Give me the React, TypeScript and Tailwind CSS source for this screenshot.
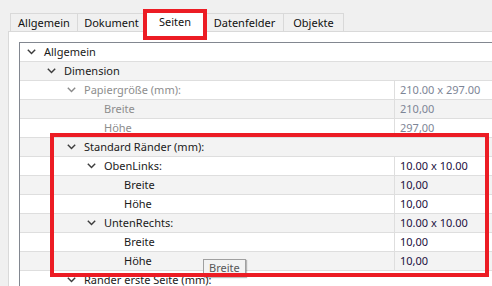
import React from "react";

type RowDef = {
  depth: number;
  label: string;
  chevron?: boolean;
  value?: string;
  group?: boolean;
  disabled?: boolean;
};

const rows: RowDef[] = [
  { depth: 0, label: "Allgemein", chevron: true, group: true },
  { depth: 1, label: "Dimension", chevron: true, group: true },
  { depth: 2, label: "Papiergröße (mm):", chevron: true, value: "210.00 x 297.00", disabled: true },
  { depth: 3, label: "Breite", value: "210,00", disabled: true },
  { depth: 3, label: "Höhe", value: "297,00", disabled: true },
  { depth: 2, label: "Standard Ränder (mm):", chevron: true, group: true },
  { depth: 3, label: "ObenLinks:", chevron: true, value: "10.00 x 10.00" },
  { depth: 4, label: "Breite", value: "10,00" },
  { depth: 4, label: "Höhe", value: "10,00" },
  { depth: 3, label: "UntenRechts:", chevron: true, value: "10.00 x 10.00" },
  { depth: 4, label: "Breite", value: "10,00" },
  { depth: 4, label: "Höhe", value: "10,00" },
  { depth: 2, label: "Ränder erste Seite (mm):", chevron: true, group: true },
];

const padByDepth = ["pl-[7px]", "pl-[27px]", "pl-[47px]", "pl-[67px]", "pl-[87px]"];

function Chevron({ gray }: { gray?: boolean }) {
  return (
    <svg width="9" height="6" viewBox="0 0 9 6" className="shrink-0">
      <path d="M0.8 0.8 L4.5 4.6 L8.2 0.8" fill="none" stroke={gray ? "#8a8a8a" : "#3c3c3c"} strokeWidth="1.4" />
    </svg>
  );
}

function Row({ r, i }: { r: RowDef; i: number }) {
  const bg = i % 2 === 1 ? "bg-[#f3f3f3]" : "bg-white";
  const textColor = r.disabled ? "text-[#8d8d8d]" : "text-[#1a1a1a]";
  const valueColor = r.disabled ? "text-[#7d8596]" : "text-[#1c1040]";
  return (
    <div className={`flex h-[19px] shrink-0 border-b border-[#dedede] ${bg}`}>
      <div className={`flex items-center ${r.group ? "flex-1" : "w-[374px]"} ${padByDepth[r.depth]}`}>
        {r.chevron ? <Chevron gray={r.disabled} /> : <span className="w-[9px] shrink-0" />}
        <span className={`ml-[8px] whitespace-nowrap ${textColor}`}>{r.label}</span>
      </div>
      {!r.group && (
        <div className={`flex flex-1 items-center border-l border-[#dedede] pl-[5px] whitespace-nowrap ${valueColor}`}>
          {r.value}
        </div>
      )}
    </div>
  );
}

const tabs = ["Allgemein", "Dokument", "Seiten", "Datenfelder", "Objekte"];
const tabWidths = ["w-[67px]", "w-[68px]", "w-[60px]", "w-[78px]", "w-[61px]"];

export default function App() {
  return (
    <div
      className="relative h-[286px] w-[492px] overflow-hidden bg-[#f0f0f0] text-[11px]"
      style={{ fontFamily: '"Segoe UI", "Noto Sans", "Open Sans", sans-serif' }}
    >
      {/* Tab bar */}
      <div className="flex h-[31px] items-end pl-[10px]">
        {tabs.map((t, i) =>
          t === "Seiten" ? (
            <div
              key={t}
              className={`relative z-10 -mb-px flex h-[21px] items-center justify-center border-x border-t border-[#d9d9d9] bg-white text-[#111] ${tabWidths[i]}`}
            >
              {t}
            </div>
          ) : (
            <div
              key={t}
              className={`flex h-[18px] items-center justify-center border-t border-l border-[#d9d9d9] pt-[2px] text-[#111] ${tabWidths[i]} ${i === 4 ? "border-r" : ""}`}
            >
              {t}
            </div>
          )
        )}
      </div>

      {/* Panel */}
      <div className="ml-[8px] h-[255px] border-l border-t border-[#d9d9d9] bg-white pl-[10px] pt-[10px]">
        <div className="flex h-full flex-col border-l border-t border-[#828790] bg-white">
          {rows.map((r, i) => (
            <Row key={i} r={r} i={i} />
          ))}
        </div>
      </div>

      {/* Tooltip */}
      <div className="absolute left-[203px] top-[259px] z-20 flex h-[18px] items-center border border-[#a0a0a0] bg-[#f3f3f3] px-[5px] text-[#575757] shadow-[1px_1px_1px_rgba(0,0,0,0.25)]">
        Breite
      </div>

      {/* Red highlight boxes */}
      <div className="pointer-events-none absolute left-[143px] top-[9px] z-30 h-[31px] w-[64px] border-[4px] border-[#ec1c24]" />
      <div className="pointer-events-none absolute left-[50px] top-[133px] z-30 h-[144px] w-[439px] border-[4px] border-[#ec1c24]" />
    </div>
  );
}
